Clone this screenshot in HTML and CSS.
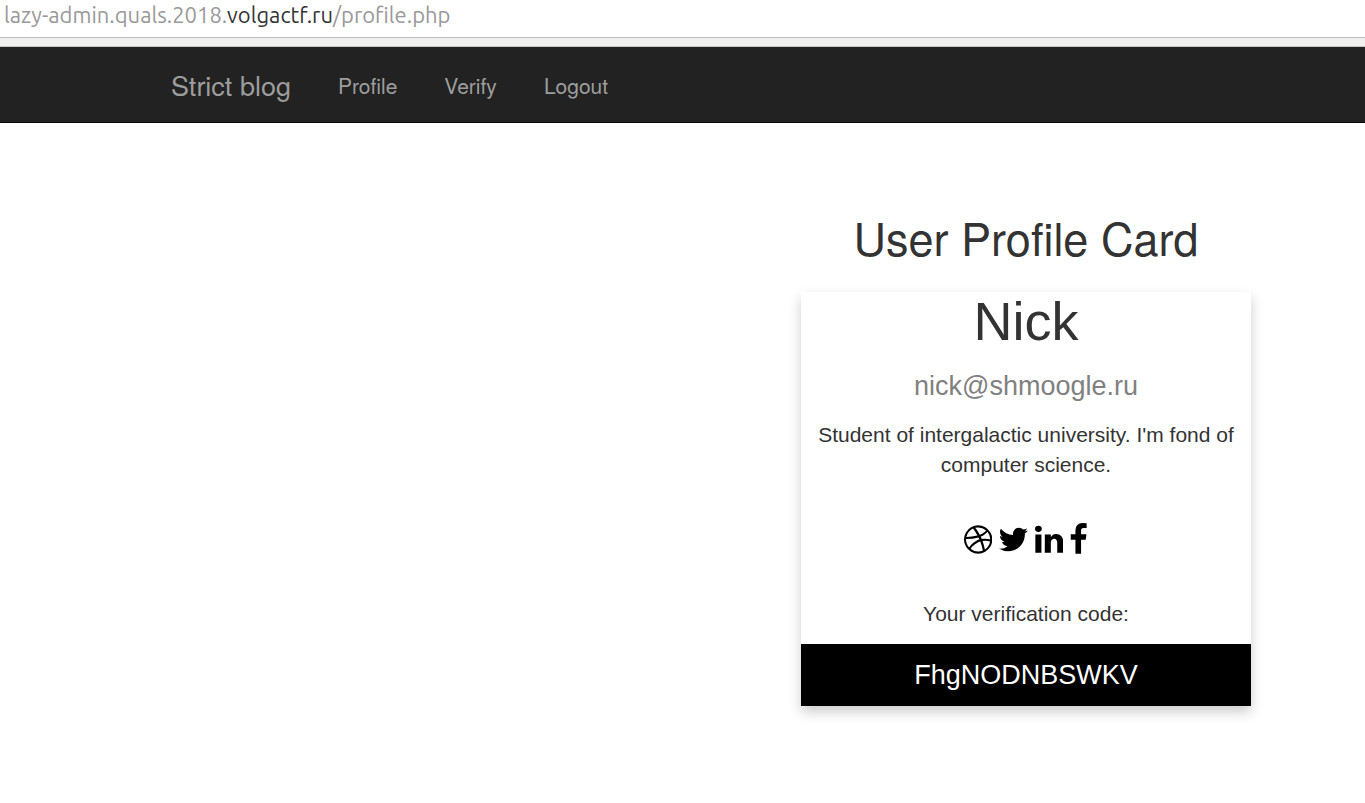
FILE: index.html
```html
<!DOCTYPE html>
<html lang="en">
<head>
<meta charset="utf-8">
<title>User Profile Card</title>
<link rel="stylesheet" href="styles.css">
</head>
<body>
<div class="address">lazy-admin.quals.2018.<span class="address-host">volgactf.ru</span>/profile.php</div>
<div class="toolbar-edge"></div>
<nav class="navbar">
  <a class="brand" href="#">Strict blog</a>
  <a class="nav-link" href="#">Profile</a>
  <a class="nav-link" href="#">Verify</a>
  <a class="nav-link" href="#">Logout</a>
</nav>
<main class="content">
  <section class="profile">
    <h2 class="heading">User Profile Card</h2>
    <div class="card">
      <h1 class="name">Nick</h1>
      <p class="email">nick@shmoogle.ru</p>
      <p class="text">Student of intergalactic university. I'm fond of computer science.</p>
      <div class="social">
        <a href="#" aria-label="Dribbble"><svg class="icon" viewBox="128 0 1536 1792"><path d="M1152 1500q-42-241-140-498h-2l-2 1q-16 6-43 16.500t-101 49-137 82-131 114.500-103 148l-15-11q184 150 418 150 132 0 256-52zm-185-607q-21-49-53-111-311 93-673 93-1 7-1 21 0 124 44 236.500t124 201.500q50-89 123.500-166.500t142.500-124.500 130.500-81 99.500-48l37-13q4-1 13-3.500t13-4.500zm-107-212q-120-213-244-378-138 65-234 186t-128 272q302 0 606-80zm684 319q-210-60-409-29 87 239 128 469 111-75 185-189.500t96-250.500zm-805-741q-1 0-2 1 1-1 2-1zm590 145q-185-164-433-164-76 0-155 19 131 170 246 382 69-26 130-60.500t96.500-61.500 65.500-57 37.500-40.500zm223 485q-3-232-149-410l-1 1q-9 12-19 24.500t-43.500 44.500-71 60.500-100 65-131.500 64.500q25 53 44 95 2 6 6.500 17.500t7.500 16.500q36-5 74.500-7t73.500-2 69 1.500 64 4 56.500 5.500 48 6.500 36.500 6 25 4.500zm112 7q0 209-103 385.500t-279.500 279.500-385.500 103-385.500-103-279.500-279.500-103-385.500 103-385.500 279.500-279.500 385.500-103 385.500 103 279.500 279.500 103 385.500z"/></svg></a>
        <a href="#" aria-label="Twitter"><svg class="icon" viewBox="64 0 1664 1792"><path d="M1684 408q-67 98-162 167 1 14 1 42 0 130-38 259.500t-115.500 248.500-184.500 210.500-258 146-323 54.500q-271 0-496-145 35 4 78 4 225 0 401-138-105-2-188-64.500t-114-159.500q33 5 61 5 43 0 85-11-112-23-185.500-111.500t-73.500-205.500v-4q68 38 146 41-66-44-105-115t-39-154q0-88 44-163 121 149 294.500 238.500t371.500 99.500q-8-38-8-74 0-134 94.500-228.500t228.500-94.500q140 0 236 102 109-21 205-78-37 115-142 178 93-10 186-50z"/></svg></a>
        <a href="#" aria-label="LinkedIn"><svg class="icon" viewBox="128 0 1536 1792"><path d="M477 625v991h-330v-991h330zm21-306q1 73-50.500 122t-135.500 49h-2q-82 0-132-49t-50-122q0-74 51.500-122.500t134.500-48.500 133 48.500 51 122.500zm1166 729v568h-329v-530q0-105-40.500-164.500t-126.500-59.500q-63 0-105.500 34.500t-63.500 85.500q-11 30-11 81v553h-329q2-399 2-647t-1-296l-1-48h329v144h-2q20-32 41-56t56.500-52 87-43.500 114.500-15.500q171 0 275 113.500t104 332.500z"/></svg></a>
        <a href="#" aria-label="Facebook"><svg class="icon" viewBox="384 0 1024 1792"><path d="M1343 12v264h-157q-86 0-116 36t-30 108v189h293l-39 296h-254v759h-306v-759h-255v-296h255v-218q0-186 104-288.500t277-102.500q147 0 228 12z"/></svg></a>
      </div>
      <p class="text">Your verification code:</p>
      <button class="code" type="button">FhgNODNBSWKV</button>
    </div>
  </section>
</main>
</body>
</html>
```
FILE: styles.css
```css
* {
  box-sizing: border-box;
}

body {
  margin: 0;
  background: #fff;
  color: #333;
  font: 21px/30px "Liberation Sans", Arial, sans-serif;
}

a {
  color: inherit;
  text-decoration: none;
}

.address {
  height: 38px;
  padding-left: 4px;
  border-bottom: 1px solid #c2c0bd;
  color: #999;
  font-family: Ubuntu, "Noto Sans", sans-serif;
  font-size: 22px;
}

.address-host {
  color: #333;
}

.toolbar-edge {
  height: 9px;
  background: #f1f0ee;
  border-bottom: 1px solid #c8c6c3;
}

.navbar {
  display: flex;
  align-items: center;
  gap: 47px;
  height: 76px;
  padding: 0 171px;
  background: #222;
  border-bottom: 1px solid #080808;
  color: #9d9d9d;
}

.navbar,
.heading {
  font-family: "Nimbus Sans", "Nimbus Sans L", "TeX Gyre Heros", "Liberation Sans", Arial, sans-serif;
}

.brand {
  font-size: 27px;
}

.content {
  display: flex;
  justify-content: flex-end;
  padding: 89px 114px 90px;
}

.profile {
  width: 450px;
  max-width: 100%;
  text-align: center;
}

.heading {
  margin: 0 0 30px;
  font-size: 45px;
  font-weight: 400;
  line-height: 50px;
}

.card {
  box-shadow: 0 6px 12px rgba(0, 0, 0, 0.2);
}

.name {
  margin: 0 0 15px;
  font-size: 54px;
  font-weight: 400;
  line-height: 59px;
}

.email {
  margin: 0 0 14px;
  color: #808080;
  font-size: 27px;
  line-height: 40px;
}

.text {
  margin: 0 0 15px;
}

.social {
  display: flex;
  justify-content: center;
  gap: 6px;
  margin: 36px 0;
  padding: 7px 0;
  color: #000;
}

.icon {
  display: block;
  height: 33px;
  fill: currentColor;
}

.code {
  display: block;
  width: 100%;
  padding: 12px;
  border: 0;
  background: #000;
  color: #fff;
  font: 27px/38px "Liberation Sans", Arial, sans-serif;
}
```
